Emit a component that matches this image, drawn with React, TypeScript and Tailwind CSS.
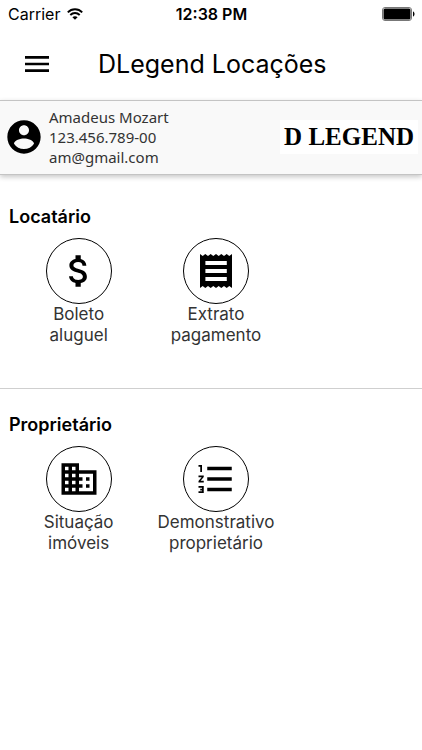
import type { ComponentType } from "react";
import {
  MdAttachMoney,
  MdBusiness,
  MdFormatListNumbered,
  MdMenu,
} from "react-icons/md";

type MenuItem = {
  icon: ComponentType<{ className?: string }>;
  lines: [string, string];
};

type MenuSection = {
  title: string;
  items: MenuItem[];
};

function ReceiptIcon({ className }: { className?: string }) {
  return (
    <svg viewBox="0 0 42 42" className={className} fill="currentColor" aria-hidden="true">
      <path
        fillRule="evenodd"
        d="M5 4l2.7 2L10.3 4l2.7 2L15.7 4l2.6 2L21 4l2.7 2L26.3 4 29 6 31.7 4l2.6 2L37 4v34l-2.7-2-2.6 2-2.7-2-2.7 2-2.6-2L21 38l-2.7-2-2.6 2-2.7-2-2.7 2-2.6-2L5 38zM10.4 11v4h21.4v-4zM10.4 19v4h21.4v-4zM10.4 27v4h21.4v-4z"
      />
    </svg>
  );
}

const sections: MenuSection[] = [
  {
    title: "Locatário",
    items: [
      { icon: MdAttachMoney, lines: ["Boleto", "aluguel"] },
      { icon: ReceiptIcon, lines: ["Extrato", "pagamento"] },
    ],
  },
  {
    title: "Proprietário",
    items: [
      { icon: MdBusiness, lines: ["Situação", "imóveis"] },
      { icon: MdFormatListNumbered, lines: ["Demonstrativo", "proprietário"] },
    ],
  },
];

function WifiIcon() {
  return (
    <svg viewBox="0 0 16 12" className="h-3 w-4" fill="none" stroke="currentColor" strokeWidth="1.9" aria-hidden="true">
      <path d="M0.8 4.4C4.8 0.2 11.2 0.2 15.2 4.4" />
      <path d="M3.3 7C6 4.3 10 4.3 12.7 7" />
      <path d="M8 11.8L5.4 9.2C6.9 7.8 9.1 7.8 10.6 9.2Z" fill="currentColor" stroke="none" />
    </svg>
  );
}

function BatteryIcon() {
  return (
    <svg viewBox="0 0 33 14" className="h-[14px] w-[33px]" aria-hidden="true">
      <rect x="0.5" y="0.5" width="29" height="13" rx="2.5" fill="#fff" stroke="#777" />
      <rect x="1.5" y="1.5" width="27" height="11" rx="1.5" fill="#000" />
      <path d="M31 4.5C33 5 33 9 31 9.5Z" fill="#000" />
    </svg>
  );
}

function AccountIcon() {
  return (
    <svg viewBox="0 0 24 24" className="size-10 shrink-0" fill="currentColor" aria-hidden="true">
      <path d="M12 2C6.48 2 2 6.48 2 12s4.48 10 10 10 10-4.48 10-10S17.52 2 12 2zm0 3c1.66 0 3 1.34 3 3s-1.34 3-3 3-3-1.34-3-3 1.34-3 3-3zm0 14.2c-2.5 0-4.71-1.28-6-3.22.03-1.99 4-3.08 6-3.08 1.99 0 5.97 1.09 6 3.08-1.29 1.94-3.5 3.22-6 3.22z" />
    </svg>
  );
}

function StatusBar() {
  return (
    <div className="grid h-7 grid-cols-3 items-center pr-[7px] pl-2 text-base">
      <div className="flex items-center gap-[7px]">
        <span>Carrier</span>
        <WifiIcon />
      </div>
      <span className="text-center font-semibold">12:38 PM</span>
      <div className="flex justify-end">
        <BatteryIcon />
      </div>
    </div>
  );
}

function UserBar() {
  return (
    <div className="flex items-center justify-between border-y border-[#c4c4c4] bg-[#f9f9f9] pt-1.5 pr-1 pb-[7px] pl-1 shadow-[0_2px_5px_rgba(0,0,0,0.22)]">
      <div className="flex items-center gap-[5px]">
        <AccountIcon />
        <div className="font-['Noto_Sans',sans-serif] text-[15px] leading-5 text-[#333]">
          <p>Amadeus Mozart</p>
          <p>123.456.789-00</p>
          <p>am@gmail.com</p>
        </div>
      </div>
      <div className="bg-white px-1 font-['Liberation_Serif',serif] text-[25px] leading-[34px] font-bold whitespace-nowrap">
        D LEGEND
      </div>
    </div>
  );
}

function Section({ title, items }: MenuSection) {
  return (
    <section className="border-b border-[#cfcfcf] pt-6 pb-[42px] last:border-b-0">
      <h2 className="pl-[9px] text-lg leading-6 font-semibold">{title}</h2>
      <div className="mt-[9px] grid grid-cols-3 pl-[10px]">
        {items.map((item) => (
          <button key={item.lines[0]} type="button" className="flex flex-col items-center">
            <span className="flex size-[66px] items-center justify-center rounded-full border border-black">
              <item.icon className="size-[42px]" />
            </span>
            <span className="text-center text-[17px] leading-[21px] text-[#333]">
              {item.lines[0]}
              <br />
              {item.lines[1]}
            </span>
          </button>
        ))}
      </div>
    </section>
  );
}

export default function App() {
  return (
    <div className="min-h-screen bg-white font-['Inter',sans-serif] text-black">
      <StatusBar />
      <header className="flex h-[72px] items-center gap-[45px] pl-[21px]">
        <button type="button" aria-label="Menu">
          <MdMenu className="size-8" />
        </button>
        <h1 className="text-[25px] leading-8">DLegend Locações</h1>
      </header>
      <UserBar />
      <main className="pt-1.5">
        {sections.map((section) => (
          <Section key={section.title} {...section} />
        ))}
      </main>
    </div>
  );
}
